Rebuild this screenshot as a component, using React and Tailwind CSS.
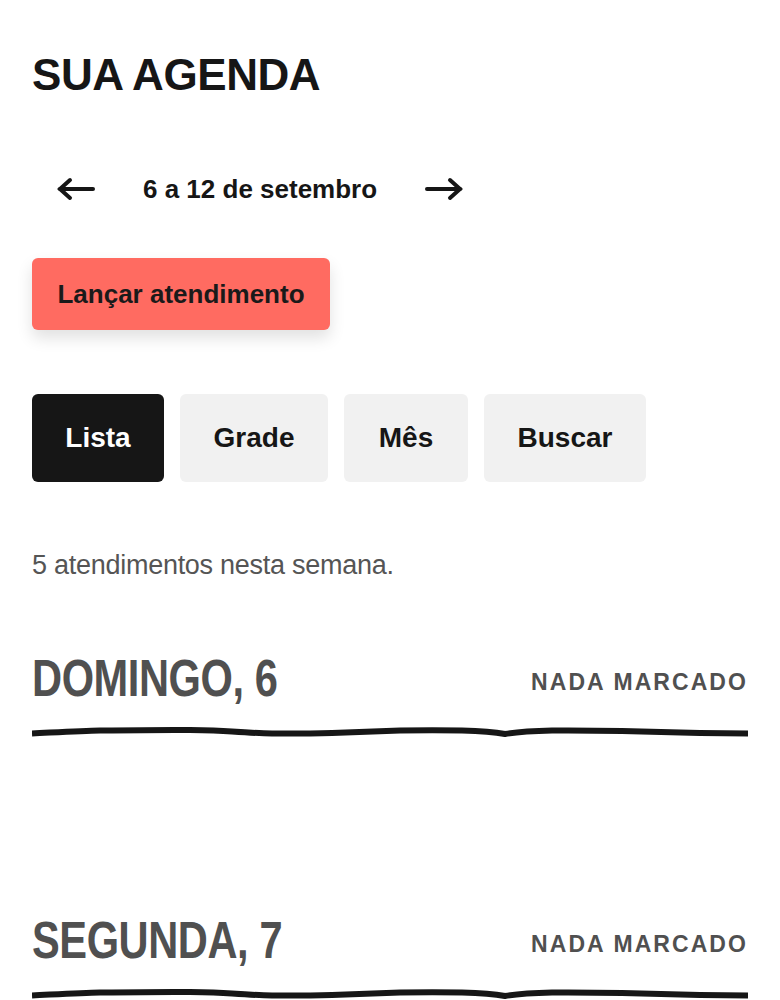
import React from "react";

function Squiggle() {
  return (
    <svg viewBox="0 0 716 14" preserveAspectRatio="none" className="block w-full h-[14px]" aria-hidden="true">
      <path
        d="M0 8.5 C 30 7, 50 5.8, 68 5.5 C 110 5, 140 4.8, 158 5 C 180 5.3, 190 5.8, 200 6.5 C 215 7.5, 228 8.3, 240 8.5 C 265 8.6, 285 8.4, 300 8 C 330 7, 350 6, 368 5.5 C 395 5.2, 415 5.3, 430 5.5 C 450 6, 465 7.5, 473 9 C 482 7.5, 500 6, 520 5.5 C 550 5.3, 570 5.6, 590 6 C 620 6.8, 645 7.6, 668 8 C 690 8.3, 705 8.5, 716 8.5"
        fill="none"
        stroke="#161616"
        strokeWidth="6"
      />
    </svg>
  );
}

function Arrow({ dir }) {
  return (
    <svg width="40" height="24" viewBox="0 0 40 24" aria-hidden="true">
      {dir === "left" ? (
        <g fill="none" stroke="#161616" strokeWidth="4" strokeLinecap="round" strokeLinejoin="miter">
          <path d="M4 12 H37" />
          <path d="M14 3 L4 12 L14 21" />
        </g>
      ) : (
        <g fill="none" stroke="#161616" strokeWidth="4" strokeLinecap="round" strokeLinejoin="miter">
          <path d="M2 12 H35" />
          <path d="M25 3 L35 12 L25 21" />
        </g>
      )}
    </svg>
  );
}

function Day({ label }) {
  return (
    <section>
      <div className="flex items-end justify-between">
        <h2 className="inline-block origin-left scale-x-[0.8] text-[52px] leading-none font-bold text-[#505050] tracking-[-0.01em] whitespace-nowrap">
          {label}
        </h2>
        <span className="text-[23px] leading-none font-bold text-[#505050] tracking-[0.09em] pb-[10px] whitespace-nowrap">NADA MARCADO</span>
      </div>
      <div className="mt-[21px]">
        <Squiggle />
      </div>
      <div className="h-[175px]" />
    </section>
  );
}

export default function App() {
  return (
    <div className="min-h-screen bg-white text-[#161616] px-8 pb-10" style={{ fontFamily: '"Liberation Sans", Arial, sans-serif' }}>
      <h1 className="pt-[53px] text-[44px] leading-none font-bold tracking-[-0.01em] text-[#161616]">SUA AGENDA</h1>

      <div className="mt-[79px] flex items-center">
        <button className="ml-[24px] flex items-center" aria-label="Semana anterior">
          <Arrow dir="left" />
        </button>
        <span className="ml-[47px] text-[26px] leading-none font-bold">6 a 12 de setembro</span>
        <button className="ml-[48px] flex items-center" aria-label="Próxima semana">
          <Arrow dir="right" />
        </button>
      </div>

      <div className="mt-[56px]">
        <button className="h-[72px] w-[298px] rounded-md bg-[#ff6b61] text-[26px] font-bold text-[#1a1a1a] shadow-[0_8px_16px_rgba(0,0,0,0.12)]">
          Lançar atendimento
        </button>
      </div>

      <div className="mt-[64px] flex gap-4">
        <button className="h-[88px] w-[132px] rounded-md bg-[#161616] text-white text-[28px] font-bold">Lista</button>
        <button className="h-[88px] w-[148px] rounded-md bg-[#f1f1f1] text-[#161616] text-[28px] font-bold">Grade</button>
        <button className="h-[88px] w-[124px] rounded-md bg-[#f1f1f1] text-[#161616] text-[28px] font-bold">Mês</button>
        <button className="h-[88px] w-[162px] rounded-md bg-[#f1f1f1] text-[#161616] text-[28px] font-bold">Buscar</button>
      </div>

      <p className="mt-[70px] text-[27px] leading-none text-[#555555] tracking-[-0.01em]">5 atendimentos nesta semana.</p>

      <div className="mt-[73px]">
        <Day label="DOMINGO, 6" />
        <Day label="SEGUNDA, 7" />
      </div>
    </div>
  );
}
